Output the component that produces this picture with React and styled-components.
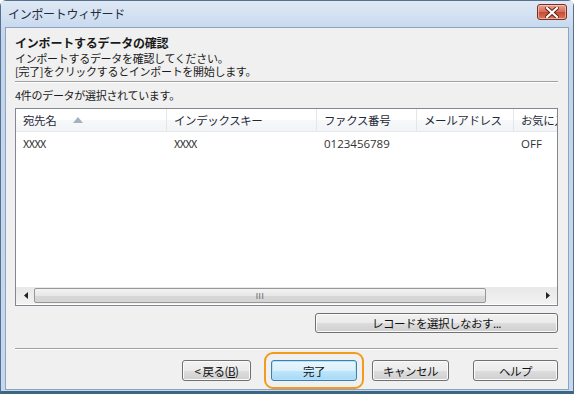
import React from "react";
import styled, { createGlobalStyle } from "styled-components";

const Global = createGlobalStyle`
  html, body { margin: 0; padding: 0; background: #ffffff; }
  body { font-family: "Noto Sans CJK JP", "Noto Sans", sans-serif; }
  * { box-sizing: border-box; }
`;

const Window = styled.div`
  width: 574px;
  height: 394px;
  display: flex;
  flex-direction: column;
  background: linear-gradient(#d3e1f1, #c2d5ec 40px, #c6d8ee);
  border: 1px solid #56718f;
  border-bottom: 3px solid #3d6680;
  border-radius: 6px 6px 0 0;
  font-size: 12px;
  color: #1a1a1a;
`;

const TitleBar = styled.div`
  height: 26px;
  flex: none;
  display: flex;
  align-items: center;
  justify-content: space-between;
  padding: 0 6px 2px 7px;
  background: linear-gradient(#dfe9f5, #c9daef);
`;

const Title = styled.span`
  font-size: 12px;
  color: #1e2c3c;
  letter-spacing: -0.3px;
`;

const CloseButton = styled.div`
  width: 30px;
  height: 16px;
  margin-top: -2px;
  border: 1px solid #7a2f22;
  border-radius: 3px;
  background: linear-gradient(#e8a294, #d56b55 50%, #c8482f 51%, #d77a5c);
  box-shadow: inset 0 0 0 1px rgba(255, 220, 210, 0.55);
  display: flex;
  align-items: center;
  justify-content: center;
`;

const Body = styled.div`
  flex: 1;
  margin: 0 4px 1px 4px;
  background: #f0f0f0;
  border: 1px solid #8ea3bd;
  display: flex;
  flex-direction: column;
  padding: 7px 10px 0 9px;
`;

const Heading = styled.div`
  font-weight: bold;
  font-size: 12px;
  line-height: 15px;
  letter-spacing: -0.2px;
`;

const Description = styled.div`
  margin-top: 2px;
  line-height: 13px;
  font-size: 11px;
  letter-spacing: -0.3px;
`;

const Separator = styled.div`
  height: 2px;
  flex: none;
  border-top: 1px solid #a0a0a0;
  border-bottom: 1px solid #ffffff;
  margin-top: ${(p) => p.$top}px;
`;

const Info = styled.div`
  margin-top: 6px;
  line-height: 12px;
  font-size: 11px;
  letter-spacing: -0.3px;
`;

const ListBox = styled.div`
  margin-top: 7px;
  height: 198px;
  border: 1px solid #828790;
  background: #ffffff;
  display: flex;
  flex-direction: column;
`;

const HeaderRow = styled.div`
  display: flex;
  height: 23px;
  flex: none;
  background: linear-gradient(#ffffff, #ffffff 50%, #f7f8fa 51%, #f3f4f6);
  border-bottom: 1px solid #e5e8ec;
`;

const HeaderCell = styled.div`
  width: ${(p) => p.$w}px;
  flex: ${(p) => (p.$grow ? 1 : "none")};
  min-width: 0;
  padding-left: 7px;
  display: flex;
  align-items: center;
  gap: 17px;
  border-right: ${(p) => (p.$grow ? "none" : "1px solid #e3e6ea")};
  color: #1f2a38;
  letter-spacing: -0.4px;
  white-space: nowrap;
  overflow: hidden;
  font-size: 11.5px;
`;

const Rows = styled.div`
  flex: 1;
`;

const DataRow = styled.div`
  display: flex;
  height: 20px;
  margin-top: 1px;
`;

const Cell = styled.div`
  width: ${(p) => p.$w}px;
  flex: ${(p) => (p.$grow ? 1 : "none")};
  padding-left: 7px;
  display: flex;
  align-items: center;
  color: #333333;
  font-family: ${(p) => (p.$latin ? '"Open Sans", "Noto Sans", sans-serif' : "inherit")};
  font-size: ${(p) => (p.$latin ? "11.5px" : "11px")};
  letter-spacing: ${(p) => (p.$x ? "-0.6px" : "0")};
  white-space: nowrap;
`;

const ScrollBar = styled.div`
  height: 17px;
  flex: none;
  display: flex;
  align-items: center;
  background: linear-gradient(#e8e8e8, #f2f2f2);
  padding: 0 1px;
  margin-bottom: 1px;
`;

const ArrowBox = styled.div`
  width: 17px;
  height: 17px;
  flex: none;
  display: flex;
  align-items: center;
  justify-content: center;
`;

const Thumb = styled.div`
  flex: none;
  width: 452px;
  height: 15px;
  border: 1px solid #979797;
  border-radius: 2px;
  background: linear-gradient(#f3f3f3, #e8e8e8 50%, #d8d8d8 51%, #d4d4d4);
  display: flex;
  align-items: center;
  justify-content: center;
  font-size: 8px;
  color: #555;
  letter-spacing: 0.5px;
`;

const Track = styled.div`
  flex: 1;
`;

const RightAlign = styled.div`
  display: flex;
  justify-content: flex-end;
  margin-top: 7px;
`;

const Button = styled.div`
  height: ${(p) => p.$h || 21}px;
  width: ${(p) => p.$w}px;
  flex: none;
  margin-left: ${(p) => p.$ml || 0}px;
  border: 1px solid ${(p) => (p.$default ? "#3c7fb1" : "#707070")};
  border-radius: 3px;
  background: ${(p) =>
    p.$default
      ? "linear-gradient(#eaf6fd, #d9f0fc 50%, #bee6fd 51%, #a7d9f5)"
      : "linear-gradient(#f2f2f2, #ebebeb 50%, #dddddd 51%, #cfcfcf)"};
  box-shadow: inset 0 0 0 1px ${(p) => (p.$default ? "#b6e2f9" : "#fbfbfb")};
  display: flex;
  align-items: center;
  justify-content: center;
  font-size: 11.5px;
  color: #111;
  letter-spacing: -0.5px;
  white-space: pre;
`;

const ButtonRow = styled.div`
  display: flex;
  align-items: center;
  justify-content: flex-end;
  margin-top: 10px;
`;

const FocusRing = styled.div`
  flex: none;
  padding: 6px 5px 6px 5px;
  margin: -8px -7px -8px 13px;
  border: 2px solid #f29b1e;
  border-radius: 9px;
`;

const Underline = styled.span`
  text-decoration: underline;
`;

const SortArrow = () => (
  <svg width="10" height="6" viewBox="0 0 10 6">
    <path d="M0 6 L5 0 L10 6 Z" fill="#a5b1c0" />
  </svg>
);

const cols = [151, 150, 100, 97];

export default function App() {
  return (
    <>
      <Global />
      <Window>
        <TitleBar>
          <Title>インポートウィザード</Title>
          <CloseButton>
            <svg width="14" height="11" viewBox="0 0 14 11">
              <path
                d="M2 1 L12 10 M12 1 L2 10"
                stroke="#5a1f14"
                strokeWidth="4"
                strokeLinecap="square"
              />
              <path
                d="M2 1 L12 10 M12 1 L2 10"
                stroke="#ffffff"
                strokeWidth="2.2"
                strokeLinecap="square"
              />
            </svg>
          </CloseButton>
        </TitleBar>
        <Body>
          <Heading>インポートするデータの確認</Heading>
          <Description>
            インポートするデータを確認してください。
            <br />
            [完了]をクリックするとインポートを開始します。
          </Description>
          <Separator $top={3} />
          <Info>4件のデータが選択されています。</Info>
          <ListBox>
            <HeaderRow>
              <HeaderCell $w={cols[0]}>
                宛先名 <SortArrow />
              </HeaderCell>
              <HeaderCell $w={cols[1]}>インデックスキー</HeaderCell>
              <HeaderCell $w={cols[2]}>ファクス番号</HeaderCell>
              <HeaderCell $w={cols[3]}>メールアドレス</HeaderCell>
              <HeaderCell $grow>お気に入り</HeaderCell>
            </HeaderRow>
            <Rows>
              <DataRow>
                <Cell $w={cols[0]} $x>XXXX</Cell>
                <Cell $w={cols[1]} $x>XXXX</Cell>
                <Cell $w={cols[2]} $latin>0123456789</Cell>
                <Cell $w={cols[3]} />
                <Cell $grow $latin>OFF</Cell>
              </DataRow>
            </Rows>
            <ScrollBar>
              <ArrowBox>
                <svg width="4" height="7" viewBox="0 0 4 7">
                  <path d="M4 0 L0 3.5 L4 7 Z" fill="#222" />
                </svg>
              </ArrowBox>
              <Thumb>III</Thumb>
              <Track />
              <ArrowBox>
                <svg width="4" height="7" viewBox="0 0 4 7">
                  <path d="M0 0 L4 3.5 L0 7 Z" fill="#222" />
                </svg>
              </ArrowBox>
            </ScrollBar>
          </ListBox>
          <RightAlign>
            <Button $w={243} $h={20}>レコードを選択しなおす...</Button>
          </RightAlign>
          <Separator $top={15} />
          <ButtonRow>
            <Button $w={69}>
              {"< 戻る("}<Underline>B</Underline>)
            </Button>
            <FocusRing>
              <Button $w={86} $default>
                完了
              </Button>
            </FocusRing>
            <Button $w={77} $ml={15}>キャンセル</Button>
            <Button $w={85} $ml={24}>ヘルプ</Button>
          </ButtonRow>
        </Body>
      </Window>
    </>
  );
}
